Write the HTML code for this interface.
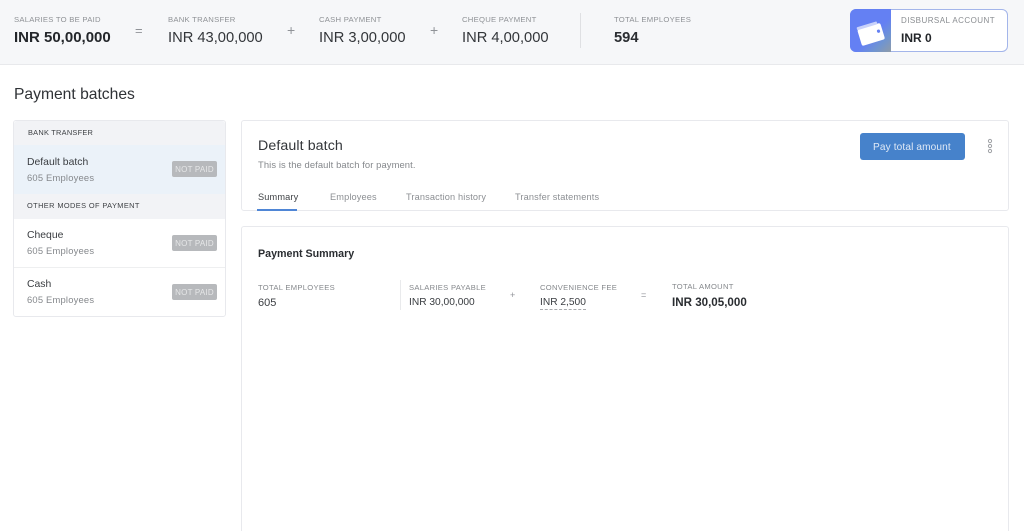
<!DOCTYPE html>
<html><head><meta charset="utf-8"><style>
html,body{margin:0;padding:0;width:1024px;height:531px;overflow:hidden;background:#fff;font-family:"Liberation Sans",sans-serif}
#r{position:relative;width:1024px;height:531px;overflow:hidden}
.t{position:absolute;white-space:nowrap;line-height:1}
.b{position:absolute;box-sizing:border-box}
.lb{font-size:7.7px;color:#8f9296;letter-spacing:.25px}
.v{font-size:14.7px;color:#33363a}
.sub{font-size:9.4px;color:#85888c;letter-spacing:.2px}
.nm{font-size:10.4px;color:#3a3d41}
.np{position:absolute;left:172px;width:45px;height:16px;background:#b7b9bc;border-radius:2px;color:#e6e7e8;font-size:8px;line-height:17.5px;text-align:center;letter-spacing:.2px}
.tab{font-size:9.2px;color:#8c8f93;letter-spacing:.15px}
.s{font-size:7.6px;color:#85888c;letter-spacing:.3px}
.sv{font-size:10.2px;color:#3a3d41}
</style></head><body><div id="r">
<div class="b" style="left:0;top:0;width:1024px;height:65px;background:#f6f7f9;border-bottom:1px solid #e8e9ec"></div>
<div class="t lb" style="left:14px;top:16px">SALARIES TO BE PAID</div>
<div class="t" style="left:14px;top:30px;font-size:15px;font-weight:bold;color:#23262a">INR 50,00,000</div>
<div class="t" style="left:135px;top:24px;font-size:13px;color:#909398">=</div>
<div class="t lb" style="left:168px;top:16px">BANK TRANSFER</div>
<div class="t v" style="left:168px;top:31px">INR 43,00,000</div>
<div class="t" style="left:287px;top:23px;font-size:14px;color:#909398">+</div>
<div class="t lb" style="left:319px;top:16px">CASH PAYMENT</div>
<div class="t v" style="left:319px;top:31px">INR 3,00,000</div>
<div class="t" style="left:430px;top:23px;font-size:14px;color:#909398">+</div>
<div class="t lb" style="left:462px;top:16px">CHEQUE PAYMENT</div>
<div class="t v" style="left:462px;top:31px">INR 4,00,000</div>
<div class="b" style="left:580px;top:13px;width:1px;height:35px;background:#dfe0e3"></div>
<div class="t lb" style="left:614px;top:16px">TOTAL EMPLOYEES</div>
<div class="t" style="left:614px;top:31px;font-size:14.7px;font-weight:bold;color:#2a2d31">594</div>

<div class="b" style="left:850px;top:9px;width:158px;height:43px;background:#fff;border:1px solid #a3b5ea;border-radius:6px"></div>
<div class="b" style="left:850px;top:9px;width:41px;height:43px;border-radius:6px 0 0 6px;background:linear-gradient(135deg,#6480f3 0%,#6480f3 58%,#6f94d2 78%,#8f9ba8 100%);overflow:hidden">
<svg width="41" height="43" viewBox="0 0 41 43" style="display:block"><g transform="translate(1 3) rotate(-17 20 22)"><rect x="8" y="14" width="24" height="17" rx="2" fill="#fff"/><rect x="8" y="11.5" width="21" height="3" rx="1" fill="#c9d2fa"/><circle cx="28" cy="21.5" r="1.6" fill="#6480f3"/></g></svg></div>
<div class="t" style="left:901px;top:17px;font-size:8px;color:#8a8d91;letter-spacing:.45px">DISBURSAL ACCOUNT</div>
<div class="t" style="left:901px;top:32px;font-size:12px;font-weight:bold;color:#23262a">INR 0</div>

<div class="t" style="left:14px;top:87px;font-size:15.65px;color:#2f3236">Payment batches</div>

<div class="b" style="left:13px;top:120px;width:213px;height:197px;background:#fff;border:1px solid #e8e9ed;border-radius:3px"></div>
<div class="b" style="left:14px;top:121px;width:211px;height:24px;background:#f2f3f6;border-radius:3px 3px 0 0"></div>
<div class="t" style="left:28px;top:129px;font-size:7.4px;color:#3f4246;letter-spacing:.25px">BANK TRANSFER</div>
<div class="b" style="left:14px;top:145px;width:211px;height:49px;background:#ebf2f9"></div>
<div class="t nm" style="left:27px;top:158px">Default batch</div>
<div class="t sub" style="left:27px;top:173px">605 Employees</div>
<div class="np" style="top:161px">NOT PAID</div>
<div class="b" style="left:14px;top:194px;width:211px;height:25px;background:#f2f3f6"></div>
<div class="t" style="left:27px;top:202px;font-size:7.4px;color:#3f4246;letter-spacing:.4px">OTHER MODES OF PAYMENT</div>
<div class="t nm" style="left:27px;top:231px">Cheque</div>
<div class="t sub" style="left:27px;top:246px">605 Employees</div>
<div class="np" style="top:235px">NOT PAID</div>
<div class="b" style="left:14px;top:267px;width:211px;height:1px;background:#eeeff0"></div>
<div class="t nm" style="left:27px;top:280px">Cash</div>
<div class="t sub" style="left:27px;top:295px">605 Employees</div>
<div class="np" style="top:284px">NOT PAID</div>

<div class="b" style="left:241px;top:120px;width:768px;height:91px;background:#fff;border:1px solid #e8e9ed;border-radius:3px"></div>
<div class="t" style="left:258px;top:139px;font-size:14.2px;color:#33363a;letter-spacing:.1px">Default batch</div>
<div class="t sub" style="left:258px;top:160px;letter-spacing:.1px">This is the default batch for payment.</div>
<div class="b" style="left:860px;top:133px;width:105px;height:27px;background:#4682cb;border-radius:3px"></div>
<div class="t" style="left:873px;top:143px;font-size:10.1px;color:#dfe9f6;letter-spacing:.13px">Pay total amount</div>
<svg class="b" style="left:986px;top:138px" width="8" height="16"><circle cx="4" cy="3" r="1.6" fill="none" stroke="#a0a2a6"/><circle cx="4" cy="8" r="1.6" fill="none" stroke="#a0a2a6"/><circle cx="4" cy="13" r="1.6" fill="none" stroke="#a0a2a6"/></svg>
<div class="t tab" style="left:258px;top:193px;color:#3f4246">Summary</div>
<div class="t tab" style="left:330px;top:193px">Employees</div>
<div class="t tab" style="left:406px;top:193px">Transaction history</div>
<div class="t tab" style="left:515px;top:193px">Transfer statements</div>
<div class="b" style="left:257px;top:209px;width:40px;height:2px;background:#4f86d6"></div>

<div class="b" style="left:241px;top:226px;width:768px;height:305px;background:#fff;border:1px solid #e8e9ed;border-bottom:none;border-radius:3px 3px 0 0"></div>
<div class="t" style="left:258px;top:249px;font-size:10.7px;font-weight:bold;color:#2a2d31">Payment Summary</div>
<div class="t s" style="left:258px;top:284px">TOTAL EMPLOYEES</div>
<div class="t" style="left:258px;top:298px;font-size:11px;color:#3a3d41">605</div>
<div class="b" style="left:400px;top:280px;width:1px;height:30px;background:#e9eaec"></div>
<div class="t s" style="left:409px;top:284px">SALARIES PAYABLE</div>
<div class="t sv" style="left:409px;top:298px">INR 30,00,000</div>
<div class="t" style="left:510px;top:291px;font-size:9px;color:#909398">+</div>
<div class="t s" style="left:540px;top:284px">CONVENIENCE FEE</div>
<div class="t sv" style="left:540px;top:298px;padding-bottom:1px;border-bottom:1px dashed #a9abae">INR 2,500</div>
<div class="t" style="left:641px;top:291px;font-size:9px;color:#909398">=</div>
<div class="t s" style="left:672px;top:283px">TOTAL AMOUNT</div>
<div class="t" style="left:672px;top:297px;font-size:11.6px;font-weight:bold;color:#2a2d31">INR 30,05,000</div>
</div></body></html>
